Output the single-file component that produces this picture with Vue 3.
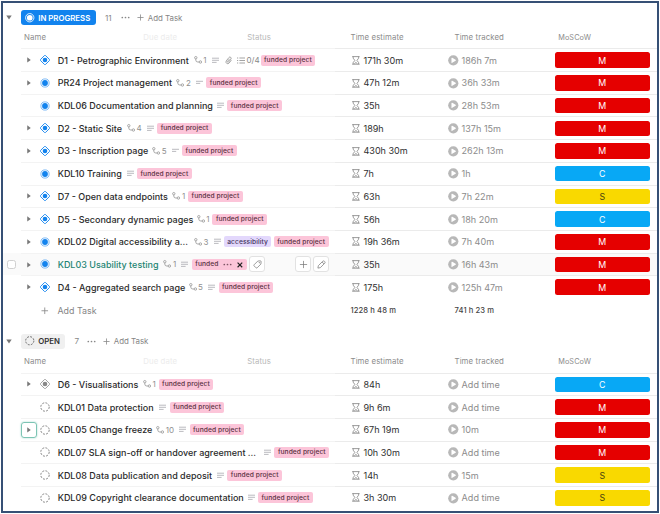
<script setup>
const groups = [
  {
    key: 'progress', label: 'IN PROGRESS', count: 11,
    estimate: '1228 h 48 m', tracked: '741 h 23 m',
    tasks: [
      { name: 'D1 - Petrographic Environment', w: 136.5, icon: 'milestone', arrow: true, subs: 1, desc: 3, extras: true, est: '171h 30m', trk: '186h 7m', p: 'M' },
      { name: 'PR24 Project management', w: 119.2, icon: 'active', arrow: true, subs: 2, desc: 2, est: '47h 12m', trk: '36h 33m', p: 'M' },
      { name: 'KDL06 Documentation and planning', w: 159.3, icon: 'active', desc: 3, est: '35h', trk: '28h 53m', p: 'M' },
      { name: 'D2 - Static Site', w: 69.8, icon: 'milestone', arrow: true, subs: 4, desc: 3, est: '189h', trk: '137h 15m', p: 'M' },
      { name: 'D3 - Inscription page', w: 95, icon: 'milestone', arrow: true, subs: 5, desc: 2, est: '430h 30m', trk: '262h 13m', p: 'M' },
      { name: 'KDL10 Training', w: 69, icon: 'active', desc: 3, est: '7h', trk: '1h', p: 'C' },
      { name: 'D7 - Open data endpoints', w: 115.2, icon: 'milestone', arrow: true, subs: 1, est: '63h', trk: '7h 22m', p: 'S' },
      { name: 'D5 - Secondary dynamic pages', w: 139.5, icon: 'milestone', arrow: true, subs: 1, est: '56h', trk: '18h 20m', p: 'C' },
      { name: 'KDL02 Digital accessibility a...', w: 136.8, icon: 'active', arrow: true, subs: 3, desc: 3, access: true, est: '19h 36m', trk: '7h 40m', p: 'M' },
      { name: 'KDL03 Usability testing', w: 106.3, icon: 'active', arrow: true, subs: 1, desc: 3, hover: true, est: '35h', trk: '16h 43m', p: 'M' },
      { name: 'D4 - Aggregated search page', w: 131.4, icon: 'milestone', arrow: true, subs: 5, desc: 3, est: '175h', trk: '125h 47m', p: 'M' },
    ],
  },
  {
    key: 'open', label: 'OPEN', count: 7,
    tasks: [
      { name: 'D6 - Visualisations', w: 85.7, icon: 'milestone-open', arrow: true, subs: 1, est: '84h', trk: 'Add time', p: 'C' },
      { name: 'KDL01 Data protection', w: 101.7, icon: 'open', desc: 3, est: '9h 6m', trk: 'Add time', p: 'M' },
      { name: 'KDL05 Change freeze', w: 99, icon: 'open', arrow: true, focus: true, subs: 10, desc: 3, est: '67h 19m', trk: '10m', p: 'M' },
      { name: 'KDL07 SLA sign-off or handover agreement ...', w: 206.4, icon: 'open', desc: 3, est: '10h 30m', trk: 'Add time', p: 'M' },
      { name: 'KDL08 Data publication and deposit', w: 159.3, icon: 'open', desc: 3, est: '14h', trk: '15m', p: 'S' },
      { name: 'KDL09 Copyright clearance documentation', w: 190, icon: 'open', desc: 3, est: '3h 30m', trk: 'Add time', p: 'S' },
    ],
  },
]
</script>

<template>
  <main class="board">
    <section v-for="g in groups" :key="g.key" :class="['group', g.key]">
      <header class="group-head">
        <svg class="caret" viewBox="0 0 6 5"><path d="M.3.4h5.4L3 4.4z" /></svg>
        <span class="status-pill">
          <svg v-if="g.key === 'progress'" class="pill-icon" viewBox="0 0 10 10"><circle cx="5" cy="5" r="4.4" fill="none" stroke="#fff" stroke-width=".9" /><circle cx="5" cy="5" r="3" fill="#fff" /></svg>
          <svg v-else class="pill-icon" viewBox="0 0 10 10"><circle cx="5" cy="5" r="4.3" fill="none" stroke="#555" stroke-width=".9" stroke-dasharray="2 1.377" /></svg>
          <span>{{ g.label }}</span>
        </span>
        <span class="count">{{ g.count }}</span>
        <svg class="dots" viewBox="0 0 9 3"><circle cx="1.3" cy="1.5" r=".85" /><circle cx="4.5" cy="1.5" r=".85" /><circle cx="7.7" cy="1.5" r=".85" /></svg>
        <svg class="plus" viewBox="0 0 8 8"><path d="M4 .5v7M.5 4h7" /></svg>
        <span class="head-add">Add Task</span>
      </header>

      <div class="columns">
        <div class="col-name"><span>Name</span><span class="due">Due date</span><span class="status">Status</span></div>
        <span>Time estimate</span>
        <span>Time tracked</span>
        <span class="col-moscow">MoSCoW</span>
      </div>

      <div v-for="t in g.tasks" :key="t.name" :class="['row', { hover: t.hover }]">
        <div class="select"><i v-if="t.hover"></i></div>
        <div class="name-cell">
          <span :class="['toggle', { focus: t.focus }]">
            <svg v-if="t.arrow" viewBox="0 0 4 6"><path d="M.2.2v5.6L3.8 3z" /></svg>
          </span>
          <svg class="state" viewBox="0 0 10 10">
            <template v-if="t.icon === 'active'">
              <circle cx="5" cy="5" r="4.1" fill="none" stroke="#4a9ff2" stroke-width=".7" />
              <circle cx="5" cy="5" r="2.9" fill="#1283ee" />
            </template>
            <template v-else-if="t.icon === 'open'">
              <circle cx="5" cy="5" r="4.2" fill="none" stroke="#777" stroke-width=".9" stroke-dasharray="1.95 1.349" />
            </template>
            <g v-else :class="['diamond', t.icon]">
              <path class="outline" d="M4.4.6Q5 0 5.6.6L9.4 4.4Q10 5 9.4 5.6L5.6 9.4Q5 10 4.4 9.4L.6 5.6Q0 5 .6 4.4z" />
              <circle cx="5" cy="5" r="2.3" />
            </g>
          </svg>
          <span :class="['title']" :style="{ width: t.w + 'px' }">{{ t.name }}</span>
          <template v-if="t.subs">
            <svg class="sub-icon" viewBox="0 0 9 8"><circle cx="1.8" cy="1.7" r="1.2" /><path d="M1.8 2.9v1.2Q1.8 6 3.8 6h1.3" /><circle cx="6.4" cy="6" r="1.2" /></svg>
            <span class="sub-count">{{ t.subs }}</span>
          </template>
          <svg v-if="t.desc" class="desc" viewBox="0 0 7 7"><path :d="t.desc === 3 ? 'M0 1.2h7M0 3.3h7M0 5.4h4.6' : 'M0 2.3h7M0 4.4h4.2'" /></svg>
          <template v-if="t.extras">
            <svg class="clip" viewBox="0 0 8 9"><path d="M6.8 4.1 4.3 7.3a1.9 1.9 0 0 1-3-2.3L4.2 1.3a1.35 1.35 0 0 1 2.1 1.7L3.7 6.2a.6.6 0 0 1-1-.8L4.9 2.7" /></svg>
            <svg class="check" viewBox="0 0 8 7"><path d="M2.4 1H8M2.4 3.5H8M2.4 6H8M0 1h1.2M0 3.5h1.2M0 6h1.2" /></svg>
            <span class="ratio">0/4</span>
          </template>
          <span v-if="t.access" class="tag violet">accessibility</span>
          <template v-if="t.hover">
            <span class="tag editing">funded
              <svg class="tag-dots" viewBox="0 0 9 3"><circle cx="1.3" cy="1.5" r=".85" /><circle cx="4.5" cy="1.5" r=".85" /><circle cx="7.7" cy="1.5" r=".85" /></svg>
              <svg class="tag-x" viewBox="0 0 6 6"><path d="M.6.6l4.8 4.8M5.4.6.6 5.4" /></svg>
            </span>
            <span class="tool"><svg viewBox="0 0 10 10"><path d="M5.3 1.2 8 .9q1-.1 1 1L8.8 4.5 4.6 8.7q-.6.5-1.2 0L1.2 6.5q-.5-.6 0-1.2z" /><circle cx="7" cy="3" r=".35" /></svg></span>
            <span class="tool push"><svg viewBox="0 0 10 10"><path d="M5 1v8M1 5h8" /></svg></span>
            <span class="tool"><svg viewBox="0 0 10 10"><path d="M1 9l.5-2.7L6.4 1.4q.9-.8 1.8 0l.4.4q.8.9 0 1.8L3.7 8.5zM5.6 2.2l2.2 2.2" /></svg></span>
          </template>
          <span v-else class="tag">funded project</span>
        </div>
        <div class="cell estimate">
          <svg class="hourglass" viewBox="0 0 8 9"><path d="M.2.6h7.6M.2 8.4h7.6M1.2.6v1.6L2.9 4.5 1.2 6.8v1.6M6.8.6v1.6L5.1 4.5l1.7 2.3v1.6" /><path d="M2.4 8l1.6-1.4L5.6 8" /></svg>
          <span>{{ t.est }}</span>
        </div>
        <div class="cell tracked">
          <svg class="play" viewBox="0 0 11 11"><circle cx="5.5" cy="5.5" r="5.3" fill="#b8b8b8" /><path d="M3.6 3.3q0-.8.8-.4l3.5 2q.8.6 0 1.2l-3.5 2q-.8.4-.8-.4z" fill="#fff" /></svg>
          <span>{{ t.trk }}</span>
        </div>
        <div class="cell moscow"><span :class="['prio', t.p]">{{ t.p }}</span></div>
      </div>

      <div v-if="g.estimate" class="totals">
        <div class="add-row"><svg class="plus" viewBox="0 0 8 8"><path d="M4 .5v7M.5 4h7" /></svg><span>Add Task</span></div>
        <span>{{ g.estimate }}</span>
        <span>{{ g.tracked }}</span>
      </div>
    </section>
  </main>
</template>

<style>
body { background: #fff; overflow: hidden; }
</style>

<style scoped>
* { box-sizing: border-box; }
.board {
  width: 658px; height: 512px; margin: 1px 0 0 1px; overflow: hidden;
  border: 2px solid #365075; background: #fff;
  font-family: Inter, "Liberation Sans", sans-serif; color: #2a2e34;
}
svg { display: block; flex: none; overflow: visible; }
.group-head { display: flex; align-items: center; height: 15px; padding-left: 2.5px; }
.group.progress { padding-top: 7px; }
.caret { width: 6px; height: 5px; fill: #777; margin-right: 9.5px; }
.status-pill {
  display: flex; align-items: center; height: 15px; width: 75px; padding-left: 4px; gap: 3.8px;
  border-radius: 3px; background: #1283ee; color: #fff; font-size: 7.8px; font-weight: 600; white-space: nowrap;
}
.open .status-pill { width: 44px; background: #f0f0f0; color: #333; }
.pill-icon { width: 9.5px; height: 9.5px; }
.count { width: 15.5px; margin-left: 9px; font-size: 8.2px; color: #888; }
.open .count { width: 12px; margin-left: 9.5px; }
.dots { width: 9px; height: 3px; fill: #888; margin-right: 7.2px; }
.plus { width: 7px; height: 7px; fill: none; stroke: #888; stroke-width: .9; margin-right: 4px; }
.head-add { font-size: 7.9px; color: #858585; }

.columns {
  display: grid; grid-template-columns: 326.5px 104px 103.7px 1fr; align-items: baseline;
  height: 23.4px; padding: 8.3px 0 0 21px; font-size: 7.8px; line-height: 9.4px; color: #8b8b8b; letter-spacing: .1px;
}
.open .columns { height: 24px; }
.col-name { display: flex; }
.due { margin-left: 97.2px; color: #ececec; }
.status { margin-left: 70px; color: #b8b8b8; }
.col-moscow { font-size: 7.3px; }

.row { display: grid; grid-template-columns: 18px 314px 103px 103px 1fr; height: 22.7px; }
.row > :not(.select) { border-top: 1px solid #f3f3f3; }
.row > .cell { border-top-color: #ebebeb; }
.row.hover { background: #fafafa; }
.select { padding: 7px 0 0 3.5px; }
.select i { display: block; width: 9px; height: 9px; border: 1px solid #d0d0d0; border-radius: 2.5px; background: #fff; }
.name-cell { display: flex; align-items: center; min-width: 0; }
.toggle { display: flex; align-items: center; justify-content: center; flex: none; width: 16px; height: 16px; border-radius: 3px; }
.toggle svg { width: 4px; height: 5.8px; fill: #777; }
.toggle.focus { border: 1px solid #7cc4b4; box-shadow: 0 0 2px #9fd8ca; }
.state { width: 10px; height: 10px; margin: 0 8px 0 2.7px; }
.diamond .outline { fill: none; stroke: #1283ee; stroke-width: .9; }
.diamond circle { fill: #1283ee; }
.diamond.milestone-open .outline { stroke: #999; }
.diamond.milestone-open circle { fill: #888; }
.title { flex: none; font-size: 9px; font-weight: 500; white-space: nowrap; color: #2b2b2b; }
.hover .title { color: #1f8573; }
.sub-icon { width: 9px; height: 8px; margin: 0 .5px 0 -.5px; fill: none; stroke: #999; stroke-width: .85; }
.sub-count { font-size: 8px; color: #909090; margin-right: 3px; }
.sub-count + .desc { margin-left: 2.2px; }
.desc { width: 7px; height: 7px; fill: none; stroke: #b2b2b8; stroke-width: .9; margin-right: 3.4px; }
.clip { width: 7.5px; height: 9px; margin-left: 3px; fill: none; stroke: #8b8b8b; stroke-width: .8; }
.check { width: 8px; height: 7px; margin-left: 4px; fill: none; stroke: #999; stroke-width: .9; }
.ratio { width: 14px; margin-left: 2px; font-size: 8px; color: #888; white-space: nowrap; }
.tag {
  display: flex; align-items: center; justify-content: center; flex: none; width: 54.7px; height: 11px;
  border-radius: 2px; background: #fcc5d9; color: #59303f; font-size: 6.7px; font-weight: 500; letter-spacing: .06px; white-space: nowrap;
}
.tag.violet { width: 47px; margin-right: 2.8px; background: #e3d8fc; color: #43355f; }
.tag.editing { justify-content: flex-start; padding-left: 3.5px; margin-right: 2.5px; }
.tag-dots { width: 9px; height: 3px; margin-left: 5px; fill: #7c5463; }
.tag-x { width: 5.8px; height: 5.8px; margin-left: 4.5px; stroke: #222; stroke-width: 1.2; }
.tool { display: flex; align-items: center; justify-content: center; flex: none; width: 16px; height: 16px; margin-right: 2px; border: 1px solid #e2e2e2; border-radius: 3px; background: #fff; }
.tool svg { width: 9px; height: 9px; fill: none; stroke: #777; stroke-width: .8; }
.tool.push { margin-left: 28px; }

.cell { display: flex; align-items: center; font-size: 9.05px; white-space: nowrap; }
.estimate { padding-left: 16.5px; color: #303030; }
.hourglass { width: 7.8px; height: 8.8px; fill: none; stroke: #808080; stroke-width: .8; margin-right: 4.2px; }
.tracked { padding-left: 10px; color: #8c8c8c; }
.play { width: 10.6px; height: 10.6px; margin-right: 3px; }
.moscow { padding-left: 13.6px; }
.prio { display: flex; align-items: center; justify-content: center; width: 95.3px; height: 15.6px; border-radius: 2.5px; background: #e50000; color: #fff; font-size: 8.8px; }
.prio.C { background: #08a8f5; }
.prio.S { background: #f9d900; color: #4a4310; }

.totals { display: grid; grid-template-columns: 347.5px 104px 1fr; align-items: center; height: 24.6px; border-top: 1px solid #fff; font-size: 7.6px; font-weight: 500; color: #444; letter-spacing: .1px; margin-bottom: 11px; }
.add-row { display: flex; align-items: center; padding-left: 38px; font-size: 8.9px; font-weight: 400; letter-spacing: 0; color: #858585; }
.add-row .plus { width: 7.5px; height: 7.5px; margin-right: 9px; }
</style>
